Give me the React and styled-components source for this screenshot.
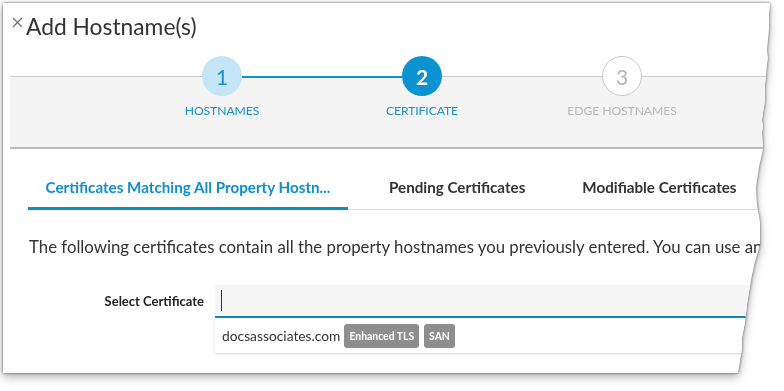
import styled, { createGlobalStyle } from "styled-components";

const GlobalStyle = createGlobalStyle`
    html, body {
        margin: 0;
        background: #ffffff;
        font-family: Lato, "Open Sans", sans-serif;
        color: #333333;
    }
`;

const BLUE = "#0a92d1";

// torn right edge of the sheet, in sheet coordinates
const TEAR = [
    [767, 0], [766, 15], [766, 27], [764, 47], [765, 55], [764, 62], [762, 82],
    [762, 97], [759, 117], [760, 124], [759, 129], [760, 147], [756, 164],
    [753, 185], [754, 202], [757, 219], [757, 242], [752, 259], [749, 272],
    [746, 289], [744, 302], [743, 311], [742, 319], [739, 335], [739, 345],
    [738, 352], [735, 370],
];
const clip = `polygon(0 0, ${TEAR.map(([x, y]) => `${x}px ${y}px`).join(", ")}, 0 370px)`;

const steps = [
    { n: 1, label: "HOSTNAMES", state: "done" },
    { n: 2, label: "CERTIFICATE", state: "current" },
    { n: 3, label: "EDGE HOSTNAMES", state: "todo" },
];

const tabs = [
    { label: "Certificates Matching All Property Hostn...", active: true },
    { label: "Pending Certificates" },
    { label: "Modifiable Certificates" },
];

export default function App(){
    return(
        <Page>
            <GlobalStyle />
            <Paper>
                <Sheet style={{ clipPath: clip }}>
                    <Header>
                        <CloseButton aria-label="Close">
                            <svg width="11" height="11" viewBox="0 0 11 11">
                                <path d="M1 1 L10 10 M10 1 L1 10" stroke="#6f6f6f" strokeWidth="1.2" fill="none" />
                            </svg>
                        </CloseButton>
                        <Title>Add Hostname(s)</Title>
                    </Header>

                    <StepBand>
                        {steps.map(step => (
                            <Step key={step.n} $state={step.state}>
                                <Circle $state={step.state}>{step.n}</Circle>
                                <StepLabel $state={step.state}>{step.label}</StepLabel>
                            </Step>
                        ))}
                    </StepBand>

                    <TabBar>
                        {tabs.map(tab => (
                            <Tab key={tab.label} $active={tab.active}>{tab.label}</Tab>
                        ))}
                    </TabBar>

                    <Intro>The following certificates contain all the property hostnames you previously entered. You can use an</Intro>

                    <FormRow>
                        <FieldLabel>Select Certificate</FieldLabel>
                        <Field>
                            <SearchBox>
                                <Caret />
                            </SearchBox>
                            <Options>
                                <Option>
                                    <OptionName>docsassociates.com</OptionName>
                                    <Badge>Enhanced TLS</Badge>
                                    <Badge>SAN</Badge>
                                </Option>
                            </Options>
                        </Field>
                    </FormRow>
                </Sheet>
            </Paper>
        </Page>
    )
}

const Page = styled.div`
    padding: 3px 0 0 3px;
    width: 784px;
    height: 391px;
    box-sizing: border-box;
    overflow: hidden;
`

const Paper = styled.div`
    width: 775px;
    filter: drop-shadow(0 0 1.5px rgba(0, 0, 0, 0.6)) drop-shadow(0 4px 4px rgba(0, 0, 0, 0.28));
`

const Sheet = styled.div`
    width: 775px;
    height: 370px;
    background: #ffffff;
    display: flex;
    flex-direction: column;
    overflow: hidden;
`

const Header = styled.div`
    display: flex;
    align-items: flex-start;
    padding: 10px 0 0 9px;
    height: 73px;
    box-sizing: border-box;
`

const CloseButton = styled.span`
    display: flex;
    width: 11px;
    height: 11px;
    margin-top: 4px;
`

const Title = styled.h1`
    margin: 0 0 0 3px;
    font-size: 22.8px;
    line-height: 26px;
    font-weight: 400;
    color: #333333;
`

const StepBand = styled.div`
    display: flex;
    margin-left: 7px;
    padding-left: 112px;
    height: 70px;
    background: #f4f4f4;
    border-top: 1px solid #cccccc;
    border-bottom: 2px solid #bdbdbd;
`

const Step = styled.div`
    position: relative;
    width: 200px;
    display: flex;
    flex-direction: column;
    align-items: center;
    margin-top: -21px;

    ${p => p.$state === "current" && `
        &::before{
            content: "";
            position: absolute;
            top: 20px;
            left: -80px;
            width: 160px;
            height: 2px;
            background: ${BLUE};
        }
    `}
`

const Circle = styled.div`
    width: 40px;
    height: 40px;
    box-sizing: border-box;
    border-radius: 50%;
    display: flex;
    align-items: center;
    justify-content: center;
    font-size: 21px;
    background: ${p => p.$state === "done" ? "#c4e5f5" : p.$state === "current" ? BLUE : "#ffffff"};
    color: ${p => p.$state === "done" ? "#1790cc" : p.$state === "current" ? "#ffffff" : "#b5b5b5"};
    border: ${p => p.$state === "todo" ? "1px solid #c8c8c8" : "none"};
    font-weight: ${p => p.$state === "current" ? 700 : 400};
`

const StepLabel = styled.div`
    margin-top: 7px;
    font-size: 12.2px;
    line-height: 16px;
    letter-spacing: -0.1px;
    color: ${p => p.$state === "todo" ? "#b8b8b8" : "#1990cc"};
`

const TabBar = styled.div`
    display: flex;
    gap: 25px;
    margin: 20px 0 0 25px;
    border-bottom: 1px solid #dddddd;
`

const Tab = styled.div`
    width: ${p => p.$active ? "320px" : "auto"};
    box-sizing: border-box;
    padding: 9px 16px 11px;
    text-align: center;
    font-size: 15.2px;
    line-height: 18px;
    font-weight: 700;
    white-space: nowrap;
    color: ${p => p.$active ? "#0f8ecd" : "#333333"};
    border-bottom: 3px solid ${p => p.$active ? "#0a8ccb" : "transparent"};
    margin-bottom: -1px;
`

const Intro = styled.p`
    margin: 26px 0 0 26px;
    font-size: 16.8px;
    line-height: 22px;
    white-space: nowrap;
    color: #333333;
`

const FormRow = styled.div`
    display: grid;
    grid-template-columns: 201px 1fr;
    column-gap: 11px;
    margin-top: 27px;
`

const FieldLabel = styled.label`
    text-align: right;
    font-size: 13px;
    font-weight: 700;
    color: #222222;
    line-height: 33px;
`

const Field = styled.div`
    display: flex;
    flex-direction: column;
`

const SearchBox = styled.div`
    height: 33px;
    box-sizing: border-box;
    background: #f5f5f5;
    border-bottom: 2px solid #0b87c5;
    display: flex;
    align-items: center;
    padding: 0 0 0 6px;
`

const Caret = styled.span`
    width: 1px;
    height: 21px;
    background: #333333;
`

const Options = styled.div`
    background: #ffffff;
    box-shadow: 0 1px 2px rgba(0, 0, 0, 0.18);
`

const Option = styled.div`
    display: flex;
    align-items: center;
    gap: 5px;
    height: 35px;
    padding-left: 7px;
`

const OptionName = styled.span`
    font-size: 13.8px;
    color: #333333;
    margin-right: -1px;
`

const Badge = styled.span`
    height: 24px;
    display: inline-flex;
    align-items: center;
    padding: 0 5px;
    border-radius: 3px;
    background: #8e8e8e;
    color: #ffffff;
    font-size: 10.4px;
    font-weight: 700;
`
